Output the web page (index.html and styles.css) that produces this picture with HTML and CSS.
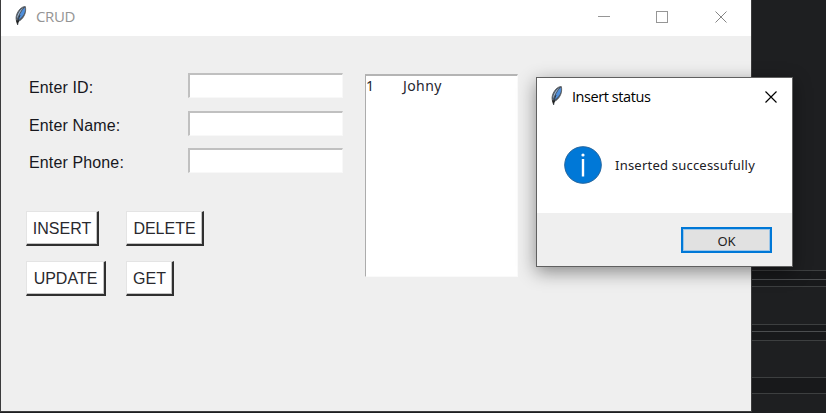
FILE: index.html
```
<!DOCTYPE html>
<html lang="en">
<head>
<meta charset="utf-8">
<title>CRUD</title>
<link rel="stylesheet" href="styles.css">
</head>
<body>
<svg width="0" height="0" class="defs" aria-hidden="true">
  <symbol id="feather" viewBox="0 0 14 20">
    <path d="M11.300.5C7.500.5 4 4.500 2.600 8.800c-.8 2.500-.7 4.600 0 6l1.700.7C9.600 13 12.800 6.500 11.300.5Z" fill="#4c5560" stroke="#50555b" stroke-width=".8"/>
    <path d="M10.800 1.500C8 4 5.200 8.500 4.200 14 9.300 10.800 11.900 6 10.800 1.500Z" fill="#4f8fdb"/>
    <path d="M9.400 1.700C5.800 3.800 3.100 8.500 3 12.800 4.500 8.800 6.500 5 9.400 1.700Z" fill="#a3bfdd"/>
    <path d="M6 9C4.900 11.800 4.100 15 3.600 19" fill="none" stroke="#25303c" stroke-width=".9"/>
    <path d="M1.800 14.300l1.400 4.500 1.900-4Z" fill="#222"/>
  </symbol>
</svg>
<div class="desktop">
  <div class="backdrop">
    <i class="panel top"></i><i class="gap g1"></i><i class="gap g2"></i><i class="panel p1"></i><i class="gap g3"></i><i class="gap g4"></i><i class="panel p2"></i><i class="gap g5"></i><i class="panel last"></i>
  </div>

  <main class="window">
    <header class="titlebar">
      <svg class="feather"><use href="#feather"/></svg>
      <span class="title">CRUD</span>
      <svg class="controls" width="130" height="14" viewBox="0 0 130 14" shape-rendering="crispEdges">
        <path d="M0 7.500h12M58.500 2.500h11v11h-11Z" fill="none" stroke="#969696"/>
        <path d="M117.500 2.500l11 11M128.500 2.500l-11 11" stroke="#858585" shape-rendering="auto"/>
      </svg>
    </header>
    <div class="content">
      <section class="left">
        <form class="fields">
          <label for="id">Enter ID:</label><input id="id">
          <label for="name">Enter Name:</label><input id="name">
          <label for="phone">Enter Phone:</label><input id="phone">
        </form>
        <div class="buttons">
          <div class="row"><button class="insert">INSERT</button><button class="delete">DELETE</button></div>
          <div class="row"><button class="update">UPDATE</button><button class="get">GET</button></div>
        </div>
      </section>
      <section class="list"><div class="record"><span class="key">1</span><span>Johny</span></div></section>
    </div>
  </main>

  <div class="dialog" role="dialog">
    <header class="dialog-title">
      <svg class="feather"><use href="#feather"/></svg>
      <span class="dialog-name">Insert status</span>
      <svg class="close" width="12" height="12" viewBox="0 0 12 12"><path d="M.5.5l11 11M11.500.5l-11 11" stroke="#000" stroke-width="1.150"/></svg>
    </header>
    <div class="message">
      <svg width="38" height="38" viewBox="0 0 38 38"><circle cx="19" cy="19" r="18.300" fill="#0078d7" stroke="#23659f" stroke-width="1"/><circle cx="19" cy="9" r="1.600" fill="#fff"/><path d="M19 13v17.500" stroke="#fff" stroke-width="2.400"/></svg>
      <span class="message-text">Inserted successufully</span>
    </div>
    <footer class="actions"><button class="ok">OK</button></footer>
  </div>
</div>
</body>
</html>
```
FILE: styles.css
```
* { box-sizing: border-box; }
body { margin: 0; overflow: hidden; }
.defs { position: absolute; }
.desktop { position: relative; width: 826px; height: 413px; overflow: hidden; background: #1e1f21; }
.backdrop { display: flex; flex-direction: column; height: 413px; }
.backdrop i { display: block; flex: none; border-bottom: 1px solid #3d3f40; background: #1e1f21; }
.backdrop .gap { background: #18191b; }
.backdrop .top { height: 271px; }
.backdrop .g1 { height: 9px; border-color: #4b4d4f; }
.backdrop .g2 { height: 7px; }
.backdrop .p1 { height: 38px; }
.backdrop .g3 { height: 7px; border-color: #4b4d4f; }
.backdrop .g4 { height: 9px; }
.backdrop .p2 { height: 37px; }
.backdrop .g5 { height: 16px; }
.backdrop .last { height: 19px; border: 0; }

.window { position: absolute; left: 0; top: 0; width: 752px; height: 412px; border: 1px solid #3b3b3c; border-top: 0; background: #efefef; }
.titlebar { display: flex; align-items: flex-start; height: 36px; background: #fff; }
.feather { width: 14px; height: 20px; margin: 6px 0 0 13px; flex: none; }
.title { margin: 6px 0 0 8px; font: 15px/21px "Open Sans", sans-serif; letter-spacing: -.4px; color: #949494; }
.controls { margin: 9px 23px 0 auto; }

.content { display: flex; align-items: flex-start; padding: 37px 0 0 25px; }
.left { width: 339px; }
.fields { display: grid; grid-template-columns: 162px 156px; grid-template-rows: repeat(3, 37.500px); font: 16px/24px "Liberation Sans", Arial, sans-serif; letter-spacing: .13px; color: #17171d; }
.fields label { padding: 3px 0 0 3px; }
.fields input { width: 155px; height: 25px; margin: 0; padding: 2px; border: solid; border-width: 2px 1px 1px 2px; border-color: #c0c0c0 #f8f8f8 #f8f8f8 #c0c0c0; background: #fff; outline: 0; }
.buttons { display: flex; flex-direction: column; gap: 15px; margin-top: 25px; }
.row { display: grid; grid-template-columns: 100px auto; justify-content: start; }
.row button { height: 35px; margin: 0; padding: 2px 0 0; border: solid; border-width: 1px 2px 2px 1px; border-color: #e4e4e4 #303030 #303030 #e4e4e4; box-shadow: inset -1px -1px #c4c4c4; background: #fff; color: #29292e; font: 16px/20px "Liberation Sans", Arial, sans-serif; }
.insert { width: 73px; }
.delete { width: 78px; }
.update { width: 80px; }
.get { width: 48px; }
.list { width: 153px; height: 203px; margin-top: 1px; border: solid; border-width: 2px 1px 1px; border-color: #b4b4b4 #fafafa #fafafa #acacac; background: #fff; color: #25252e; }
.record { display: flex; font: 14px/19px "Noto Sans", sans-serif; letter-spacing: .4px; }
.key { width: 37px; }

.dialog { position: absolute; left: 536px; top: 77px; width: 257px; height: 190px; border: 1px solid #606060; background: #fff; box-shadow: 0 5px 17px rgba(0, 0, 0, .43); }
.dialog-title { display: flex; align-items: flex-start; height: 38px; }
.dialog-title .feather { margin-top: 8px; }
.dialog-name { margin: 8px 0 0 8px; font: 14.500px/21px "Open Sans", sans-serif; letter-spacing: -.43px; color: #000; }
.close { margin: 13px 15px 0 auto; }
.message { display: flex; align-items: center; height: 97px; padding: 0 0 0 27px; }
.message-text { margin: 1px 0 0 13px; font: 13px/20px "Noto Sans", sans-serif; letter-spacing: .22px; color: #202025; white-space: nowrap; }
.actions { display: flex; justify-content: flex-end; height: 53px; padding: 14px 20px 0 0; background: #efefef; }
.ok { width: 91px; height: 26px; margin: 0; padding: 1px 0 0; border: 2px solid #0078d7; background: #e1e1e1; box-shadow: inset 0 0 0 1px #9bc5e8; font: 13px/20px "Noto Sans", sans-serif; color: #222; }
```
